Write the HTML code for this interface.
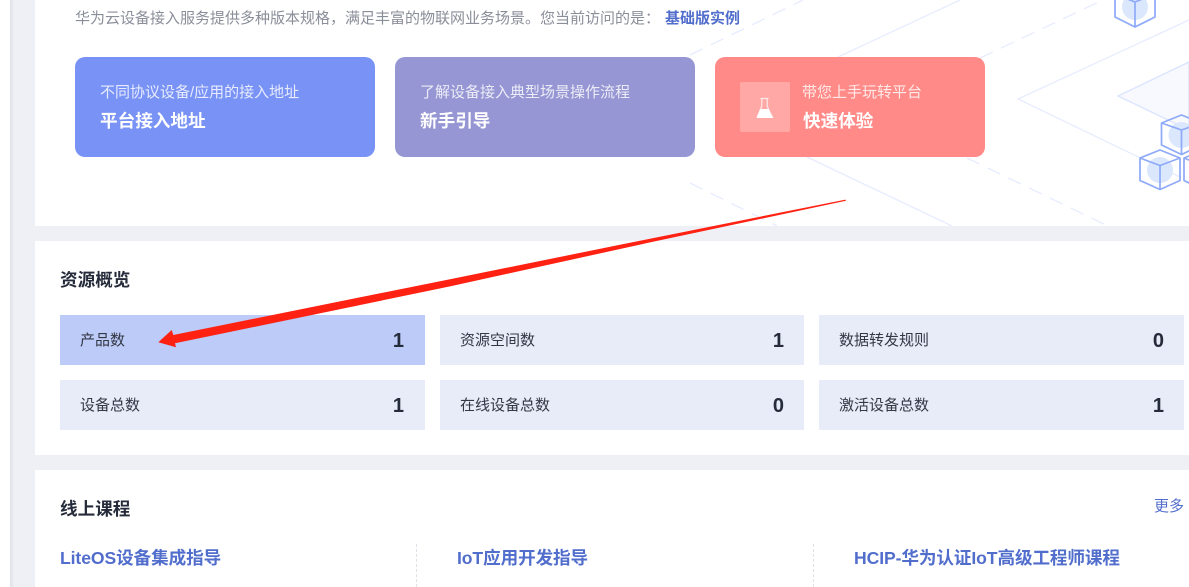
<!DOCTYPE html>
<html lang="zh-CN">
<head>
<meta charset="utf-8">
<style>
html,body{margin:0;padding:0;width:1189px;height:587px;overflow:hidden;background:#fff}
body{position:relative;font-family:"Liberation Sans","Noto Sans CJK SC",sans-serif;color:#252b3a}
.a{position:absolute;white-space:nowrap}
.bg{left:10px;top:0;width:1179px;height:587px;background:#eef0f5}
.sh{left:10px;top:0;width:4px;height:587px;background:linear-gradient(90deg,#dfe1e8,#eef0f5)}
.panel{left:35px;width:1154px;background:#fff}
.card{top:57px;height:100px;border-radius:10px}
.sub{font-size:15px;line-height:20px;top:83px;color:rgba(255,255,255,.82)}
.tt{font-size:17.6px;line-height:24px;top:109px;font-weight:700;color:#fff}
.item{width:365px;height:50px;background:#e8ebf8}
.lab{font-size:15px;line-height:20px;color:#333845}
.num{font-size:20px;line-height:24px;font-weight:700;color:#252b3a;text-align:right;width:30px}
.h{font-size:17.6px;line-height:24px;font-weight:700;color:#252b3a;left:60px}
.c{font-size:17.6px;letter-spacing:-.1px;line-height:24px;font-weight:700;color:#526ecc;top:546px}
.d{width:0;top:544px;height:43px;border-left:1px dashed #dfe1e6}
</style>
</head>
<body>
<div class="a bg"></div>
<div class="a sh"></div>
<div class="a panel" style="top:0;height:226px"></div>
<div class="a panel" style="top:241px;height:214px"></div>
<div class="a panel" style="top:470px;height:117px"></div>

<svg class="a" style="left:0;top:0" width="1189" height="226" viewBox="0 0 1189 226" fill="none">
  <g stroke="#e7ecff" stroke-width="1.3">
    <path d="M838 57L960 0"/>
    <path d="M1189 20L1018 99L1180 177"/>
    <path d="M807 157L952 226"/>
    <path d="M690 55L803 0" stroke-dasharray="14 9"/>
    <path d="M980 58L1103 0" stroke-dasharray="14 9"/>
    <path d="M967 158L1108 226" stroke-dasharray="14 9"/>
    <path d="M690 183L777 226" stroke-dasharray="14 9"/>
  </g>
  <path d="M1189 62L1118 96L1189 130Z" fill="#f7f9ff" stroke="#dbe4ff" stroke-width="1.3"/>
  <circle cx="1135" cy="7" r="13" fill="#dbe7fd"/>
  <path d="M1115 -6V17L1135 27L1155 17V-6M1135 27V2M1115 -6L1135 2L1155 -6" stroke="#8eaaf8" stroke-width="1.7" stroke-linejoin="round"/>
  <circle cx="1181.500" cy="135" r="13" fill="#dbe7fd"/>
  <path d="M1161.500 123L1181.500 115L1201.500 123V145L1181.500 154.500L1161.500 145ZM1161.500 123L1181.500 130L1201.500 123M1181.500 130V154.500" stroke="#8eaaf8" stroke-width="1.7" stroke-linejoin="round" fill="none"/>
  <circle cx="1160" cy="170" r="13" fill="#dbe7fd"/>
  <path d="M1140 158L1160 150L1180 158V180.500L1160 189.500L1140 180.500ZM1140 158L1160 165.500L1180 158M1160 165.500V189.500" stroke="#8eaaf8" stroke-width="1.7" stroke-linejoin="round" fill="none"/>
  <path d="M1184 158L1204 150V190L1184 180.500ZM1184 158L1204 166" stroke="#8eaaf8" stroke-width="1.7" stroke-linejoin="round" fill="none"/>
</svg>

<div class="a" style="left:75px;top:9px;font-size:15px;line-height:20px;color:#8a8e99">华为云设备接入服务提供多种版本规格，满足丰富的物联网业务场景。您当前访问的是：</div>
<div class="a" style="left:665px;top:9px;font-size:15px;line-height:20px;font-weight:700;color:#526ecc">基础版实例</div>

<div class="a card" style="left:75px;width:300px;background:#7892f5"></div>
<div class="a sub" style="left:100px">不同协议设备/应用的接入地址</div>
<div class="a tt" style="left:100px">平台接入地址</div>

<div class="a card" style="left:395px;width:300px;background:#9696d4"></div>
<div class="a sub" style="left:420px">了解设备接入典型场景操作流程</div>
<div class="a tt" style="left:420px">新手引导</div>

<div class="a card" style="left:715px;width:270px;background:#ff8a87"></div>
<div class="a" style="left:740px;top:82px;width:50px;height:50px;border-radius:2px;background:rgba(255,255,255,.26)"></div>
<svg class="a" style="left:740px;top:82px" width="50" height="50" viewBox="0 0 50 50">
  <path d="M20.500 16.500H28.500M21.800 16.500V24L17.500 34.500H31.500L27.200 24V16.500" fill="none" stroke="#fff" stroke-width="1.200" opacity=".75"/>
  <path d="M20.500 27H28.500L33.500 36H16.500Z" fill="#fff"/>
</svg>
<div class="a sub" style="left:802px">带您上手玩转平台</div>
<div class="a tt" style="left:803px">快速体验</div>

<div class="a h" style="top:268px">资源概览</div>

<div class="a item" style="left:60px;top:315px;background:#bccbf8"></div>
<div class="a lab" style="left:80px;top:331px">产品数</div>
<div class="a num" style="left:374px;top:329px">1</div>

<div class="a item" style="left:440px;top:315px;width:364px"></div>
<div class="a lab" style="left:460px;top:331px">资源空间数</div>
<div class="a num" style="left:754px;top:329px">1</div>

<div class="a item" style="left:819px;top:315px"></div>
<div class="a lab" style="left:839px;top:331px">数据转发规则</div>
<div class="a num" style="left:1134px;top:329px">0</div>

<div class="a item" style="left:60px;top:380px"></div>
<div class="a lab" style="left:80px;top:396px">设备总数</div>
<div class="a num" style="left:374px;top:394px">1</div>

<div class="a item" style="left:440px;top:380px;width:364px"></div>
<div class="a lab" style="left:460px;top:396px">在线设备总数</div>
<div class="a num" style="left:754px;top:394px">0</div>

<div class="a item" style="left:819px;top:380px"></div>
<div class="a lab" style="left:839px;top:396px">激活设备总数</div>
<div class="a num" style="left:1134px;top:394px">1</div>

<div class="a h" style="top:497px">线上课程</div>
<div class="a" style="left:1154px;top:497px;font-size:15px;line-height:20px;color:#526ecc">更多</div>

<div class="a c" style="left:60px">LiteOS设备集成指导</div>
<div class="a d" style="left:416px"></div>
<div class="a c" style="left:457px">IoT应用开发指导</div>
<div class="a d" style="left:813px"></div>
<div class="a c" style="left:854px">HCIP-华为认证IoT高级工程师课程</div>

<svg class="a" style="left:0;top:0" width="1189" height="587" viewBox="0 0 1189 587">
  <path d="M845.500 199.600L650 238.700L450 279.200L173.300 335L171.700 330L158.300 342.300L176 347.300L175 343.300L450 286.400L650 242.400L846 200.700Z" fill="#ff2112"/>
</svg>
</body>
</html>
